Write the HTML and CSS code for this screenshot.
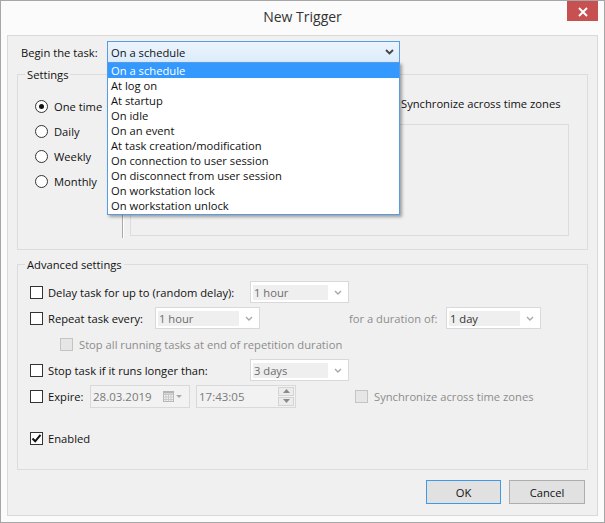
FILE: index.html
```html
<!DOCTYPE html>
<html>
<head>
<meta charset="utf-8">
<title>New Trigger</title>
<link rel="stylesheet" href="styles.css">
</head>
<body>
<div class="window">
  <div class="titlebar">
    <span class="title">New Trigger</span>
    <button class="close" aria-label="Close">
      <svg width="10" height="10" viewBox="0 0 10 10"><path d="M1 1 L9 9 M9 1 L1 9" stroke="#fff" stroke-width="2" fill="none"/></svg>
    </button>
  </div>
  <div class="client">
    <div class="begin-row">
      <span class="begin-label">Begin the task:</span>
      <div class="combo-wrap">
        <div class="main-select">
          <span>On a schedule</span>
          <svg width="9" height="6" viewBox="0 0 9 6"><path d="M1 1 L4.5 4.5 L8 1" stroke="#444" stroke-width="1.8" fill="none"/></svg>
        </div>
        <ul class="dropdown">
          <li class="sel">On a schedule</li>
          <li>At log on</li>
          <li>At startup</li>
          <li>On idle</li>
          <li>On an event</li>
          <li>At task creation/modification</li>
          <li>On connection to user session</li>
          <li>On disconnect from user session</li>
          <li>On workstation lock</li>
          <li>On workstation unlock</li>
        </ul>
      </div>
    </div>

    <div class="group settings">
      <div class="group-title">Settings</div>
      <div class="settings-body">
        <div class="freq">
          <div class="radio-row"><span class="radio checked"></span>One time</div>
          <div class="radio-row"><span class="radio"></span>Daily</div>
          <div class="radio-row"><span class="radio"></span>Weekly</div>
          <div class="radio-row"><span class="radio"></span>Monthly</div>
        </div>
        <div class="vsep"></div>
        <div class="recur">
          <div class="start-row">
            <span class="start-gap"></span>
            <div class="datebox start-date"></div>
            <div class="datebox start-time"></div>
            <span class="cb"></span>
            <span class="sync-label">Synchronize across time zones</span>
          </div>
          <div class="recur-box"></div>
        </div>
      </div>
    </div>

    <div class="group advanced">
      <div class="group-title">Advanced settings</div>
      <div class="rows">
        <div class="row">
          <span class="cb"></span>
          <span class="lbl w-long">Delay task for up to (random delay):</span>
          <div class="combo w-99"><span class="val">1 hour</span><span class="arr"><svg width="8" height="5" viewBox="0 0 8 5"><path d="M1 1 L4 4 L7 1" stroke="#a8a8a8" stroke-width="1.4" fill="none"/></svg></span></div>
        </div>
        <div class="row">
          <span class="cb"></span>
          <span class="lbl w-repeat">Repeat task every:</span>
          <div class="combo w-105"><span class="val">1 hour</span><span class="arr"><svg width="8" height="5" viewBox="0 0 8 5"><path d="M1 1 L4 4 L7 1" stroke="#a8a8a8" stroke-width="1.4" fill="none"/></svg></span></div>
          <span class="lbl dis w-dur">for a duration of:</span>
          <div class="combo w-95 dark"><span class="val">1 day</span><span class="arr"><svg width="8" height="5" viewBox="0 0 8 5"><path d="M1 1 L4 4 L7 1" stroke="#a8a8a8" stroke-width="1.4" fill="none"/></svg></span></div>
        </div>
        <div class="row indent">
          <span class="cb disabled"></span>
          <span class="lbl dis">Stop all running tasks at end of repetition duration</span>
        </div>
        <div class="row">
          <span class="cb"></span>
          <span class="lbl w-long">Stop task if it runs longer than:</span>
          <div class="combo w-99"><span class="val">3 days</span><span class="arr"><svg width="8" height="5" viewBox="0 0 8 5"><path d="M1 1 L4 4 L7 1" stroke="#a8a8a8" stroke-width="1.4" fill="none"/></svg></span></div>
        </div>
        <div class="row">
          <span class="cb"></span>
          <span class="lbl w-expire">Expire:</span>
          <div class="picker">
            <span class="pval">28.03.2019</span>
            <svg class="cal" width="20" height="11" viewBox="0 0 20 11">
              <rect x="0.5" y="0.5" width="10" height="10" fill="#f4f4f4" stroke="#b5b5b5"/>
              <path d="M0.5 3.5 H10.5 M0.5 6 H10.5 M0.5 8.5 H10.5 M3 3.5 V10.5 M5.5 3.5 V10.5 M8 3.5 V10.5" stroke="#c8c8c8" stroke-width="1"/>
              <rect x="0.5" y="0.5" width="10" height="2" fill="#b5b5b5"/>
              <path d="M13 4 L19 4 L16 7 Z" fill="#a8a8a8"/>
            </svg>
          </div>
          <div class="picker timebox">
            <span class="pval">17:43:05</span>
            <span class="spin">
              <span class="sbtn"><svg width="7" height="4" viewBox="0 0 7 4"><path d="M0 4 L3.5 0 L7 4 Z" fill="#8a8a8a"/></svg></span>
              <span class="sbtn"><svg width="7" height="4" viewBox="0 0 7 4"><path d="M0 0 L3.5 4 L7 0 Z" fill="#8a8a8a"/></svg></span>
            </span>
          </div>
          <span class="cb disabled sync-cb"></span>
          <span class="lbl dis">Synchronize across time zones</span>
        </div>
        <div class="row enabled-row">
          <span class="cb"><svg width="11" height="11" viewBox="0 0 11 11"><path d="M1.5 5.5 L4.2 8.3 L9.5 1.8" stroke="#111" stroke-width="2" fill="none"/></svg></span>
          <span class="lbl">Enabled</span>
        </div>
      </div>
    </div>

    <div class="buttons">
      <button class="btn ok">OK</button>
      <button class="btn cancel">Cancel</button>
    </div>
  </div>
</div>
</body>
</html>
```

FILE: styles.css
```css
* { box-sizing: border-box; }

body {
  margin: 0;
  font-family: "Segoe UI", "Open Sans", "Noto Sans", sans-serif;
  font-size: 11.2px;
  color: #111;
  background: #fff;
}

.window {
  width: 605px;
  height: 523px;
  border: 1px solid #a6a6a6;
  background: #fbfbfb;
  display: flex;
  flex-direction: column;
}

.titlebar {
  height: 34px;
  display: grid;
  grid-template-columns: 1fr auto 1fr;
  flex: none;
}

.title {
  grid-column: 2;
  align-self: center;
  font-size: 14px;
  color: #333;
  margin-top: -3px;
}

.close {
  grid-column: 3;
  justify-self: end;
  align-self: start;
  width: 31px;
  height: 20px;
  margin-right: 6px;
  padding: 2px 0 0;
  border: 0;
  background: #c75050;
  display: flex;
  align-items: center;
  justify-content: center;
}

.client {
  margin: 0 6px;
  height: 481px;
  border: 1px solid #d9d9d9;
  background: #f0f0f0;
}

/* Begin row */
.begin-row {
  display: flex;
  align-items: center;
  height: 22px;
  margin-top: 5px;
  padding-left: 13px;
}

.begin-label { width: 86px; }

.combo-wrap {
  position: relative;
  width: 293px;
  height: 22px;
}

.main-select {
  height: 22px;
  border: 1px solid #569de5;
  background: linear-gradient(#ecf4fc, #dcecfc);
  display: flex;
  align-items: center;
  justify-content: space-between;
  padding: 0 5px 0 3px;
}

.dropdown {
  position: absolute;
  top: 21px;
  left: 0;
  width: 293px;
  margin: 0;
  padding: 0 0 1px;
  list-style: none;
  background: #fff;
  border: 1px solid #569de5;
  box-shadow: 2px 2px 3px rgba(0, 0, 0, 0.35);
  z-index: 10;
}

.dropdown li {
  height: 15px;
  line-height: 15px;
  padding-left: 3px;
  white-space: nowrap;
}

.dropdown li.sel {
  background: #3399ff;
  color: #fff;
}

/* Groups */
.group {
  margin: 0 9px;
  border: 1px solid #dcdcdc;
}

.group-title {
  margin: -8px 0 0 7px;
  padding: 0 2px;
  width: fit-content;
  line-height: 15px;
  background: #f0f0f0;
}

.settings {
  margin-top: 11px;
  height: 176px;
}

.settings-body {
  display: flex;
  align-items: flex-start;
  margin-top: 10px;
}

.freq {
  width: 104px;
  padding: 2px 0 0 17px;
}

.radio-row {
  display: flex;
  align-items: center;
  height: 25px;
  white-space: nowrap;
}

.radio {
  width: 13px;
  height: 13px;
  border: 1px solid #333;
  border-radius: 50%;
  background: #fff;
  margin-right: 6px;
  display: flex;
  align-items: center;
  justify-content: center;
  flex: none;
}

.radio.checked::after {
  content: "";
  width: 5px;
  height: 5px;
  border-radius: 50%;
  background: #111;
}

.vsep {
  width: 2px;
  height: 143px;
  margin-top: 3px;
  border-left: 1px solid #a9a9a9;
  border-right: 1px solid #fff;
}

.recur {
  margin-left: 6px;
  width: 439px;
}

.start-row {
  display: flex;
  align-items: center;
  height: 22px;
  white-space: nowrap;
}

.start-gap { width: 40px; }

.datebox {
  height: 22px;
  border: 1px solid #b5b5b5;
  background: #fff;
}

.start-date { width: 115px; }
.start-time { width: 86px; margin-left: 6px; margin-right: 5px; }

.sync-label { margin-left: 1px; }

.recur-box {
  margin-top: 10px;
  height: 112px;
  border: 1px solid #dcdcdc;
}

/* Advanced */
.advanced {
  margin-top: 14px;
  height: 206px;
}

.rows { margin-top: 7px; }

.row {
  display: flex;
  align-items: center;
  height: 26px;
  padding-left: 12px;
  white-space: nowrap;
}

.row.indent { padding-left: 42px; }

.enabled-row { margin-top: 16px; }

.cb {
  width: 13px;
  height: 13px;
  border: 1px solid #333;
  background: #fff;
  margin-right: 5px;
  flex: none;
  display: flex;
  align-items: center;
  justify-content: center;
}

.cb.disabled {
  border-color: #c4c4c4;
  background: #e6e6e6;
  margin-right: 6px;
}

.lbl.dis { color: #8d8d8d; }

.w-long { width: 202px; }
.w-repeat { width: 107px; }
.w-dur { width: 97px; margin-left: 89px; }
.w-expire { width: 42px; }

.combo {
  height: 22px;
  border: 1px solid #d9d9d9;
  background: #fff;
  display: flex;
  padding: 3px 0 2px 2px;
  color: #6d6d6d;
}

.combo.dark { color: #333; }

.combo .val {
  flex: 1;
  background: #efefef;
  line-height: 15px;
  padding-left: 1px;
}

.combo .arr {
  width: 20px;
  display: flex;
  align-items: center;
  justify-content: center;
}

.w-99 { width: 99px; }
.w-105 { width: 105px; }
.w-95 { width: 95px; }

.picker {
  width: 100px;
  height: 23px;
  border: 1px solid #d9d9d9;
  background: #f2f2f2;
  display: flex;
  align-items: center;
  padding: 0 6px 0 2px;
  color: #7a7a7a;
  font-size: 11.5px;
}

.picker .pval { flex: 1; }

.timebox {
  margin-left: 6px;
  padding-right: 1px;
}

.spin {
  display: flex;
  flex-direction: column;
  gap: 1px;
}

.sbtn {
  width: 16px;
  height: 9px;
  border: 1px solid #d4d4d4;
  background: #ececec;
  display: flex;
  align-items: center;
  justify-content: center;
}

.sync-cb { margin-left: 59px; }

/* Buttons */
.buttons {
  display: flex;
  justify-content: flex-end;
  gap: 8px;
  margin-top: 10px;
  padding-right: 12px;
}

.btn {
  height: 24px;
  padding: 0;
  border: 1px solid #adadad;
  background: #e1e1e1;
  font: inherit;
  color: #111;
}

.ok { width: 75px; border-color: #3c9ae6; }
.cancel { width: 76px; }
```
